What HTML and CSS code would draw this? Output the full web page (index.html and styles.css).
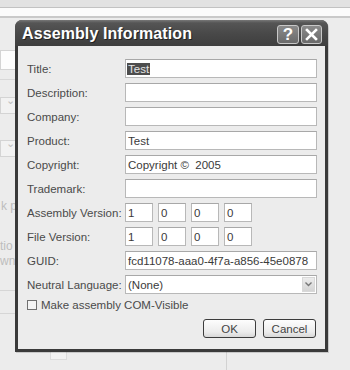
FILE: index.html
```html
<!DOCTYPE html>
<html lang="en">
<head>
    <meta charset="UTF-8">
    <meta name="viewport" content="width=device-width, initial-scale=1.0">
    <title>Assembly Information</title>
    <link rel="stylesheet" href="styles.css">
</head>
<body>
    <div class="desk">
        <div class="toolbar"></div>
        <div class="tabstrip"></div>
        <div class="page">
            <div class="bg-field bg-white"></div>
            <div class="bg-line"></div>
            <div class="bg-field bg-drop"><span class="bg-arrow">&#8964;</span></div>
            <div class="bg-field bg-drop second"><span class="bg-arrow">&#8964;</span></div>
            <div class="bg-label first">k p</div>
            <div class="bg-label tall">tio</div>
            <div class="bg-label">wn</div>
            <div class="bg-rule"></div>
            <div class="bg-rule"></div>
            <div class="bg-bottom">
                <div class="bg-drop wide"><span class="bg-arrow">&#8964;</span></div>
                <div class="bg-split"></div>
            </div>
        </div>
    </div>

    <div class="dialog">
        <div class="titlebar">
            <span class="title">Assembly Information</span>
            <div class="caption-buttons">
                <span class="cap-btn help">?</span>
                <span class="cap-btn close">
                    <svg width="13" height="13" viewBox="0 0 13 13">
                        <path d="M2 2 L11 11 M11 2 L2 11" stroke="#fff" stroke-width="2.6" stroke-linecap="square"/>
                    </svg>
                </span>
            </div>
        </div>
        <div class="dialog-body">
            <div class="fields">
                <label>Title:</label>
                <div class="textbox"><span class="selected">Test</span></div>
                <label>Description:</label>
                <div class="textbox"></div>
                <label>Company:</label>
                <div class="textbox"></div>
                <label>Product:</label>
                <div class="textbox">Test</div>
                <label>Copyright:</label>
                <div class="textbox">Copyright &copy;&nbsp; 2005</div>
                <label>Trademark:</label>
                <div class="textbox"></div>
                <label>Assembly Version:</label>
                <div class="version">
                    <div class="textbox">1</div>
                    <div class="textbox">0</div>
                    <div class="textbox">0</div>
                    <div class="textbox">0</div>
                </div>
                <label>File Version:</label>
                <div class="version">
                    <div class="textbox">1</div>
                    <div class="textbox">0</div>
                    <div class="textbox">0</div>
                    <div class="textbox">0</div>
                </div>
                <label>GUID:</label>
                <div class="textbox">fcd11078-aaa0-4f7a-a856-45e0878</div>
                <label>Neutral Language:</label>
                <div class="textbox combo">
                    <span>(None)</span>
                    <span class="combo-btn">
                        <svg width="7" height="5" viewBox="0 0 7 5">
                            <path d="M0.5 0.5 L3.5 3.5 L6.5 0.5" stroke="#777" stroke-width="1.4" fill="none"/>
                        </svg>
                    </span>
                </div>
                <div class="check-row">
                    <span class="checkbox"></span>
                    <span>Make assembly COM-Visible</span>
                </div>
            </div>
            <div class="buttons">
                <button>OK</button>
                <button>Cancel</button>
            </div>
        </div>
    </div>
</body>
</html>
```

FILE: styles.css
```css
body {
    margin: 0;
    font-family: "Liberation Sans", Arial, sans-serif;
    background-color: #e9e9e9;
    width: 350px;
    height: 370px;
    overflow: hidden;
}
.desk {
    height: 370px;
    display: flex;
    flex-direction: column;
}
.toolbar {
    height: 7px;
    background-color: #e2e2e2;
    border-bottom: 1px solid #c2c2c2;
}
.tabstrip {
    height: 8px;
    background-color: #fbfbfb;
    border-bottom: 2px solid #c9c9c9;
}
.page {
    flex: 1;
    display: flex;
    flex-direction: column;
    background-color: #ececec;
    padding-top: 32px;
}

/* faint form behind the dialog */
.bg-field {
    height: 18px;
    width: 40px;
    border: 1px solid #d4d4d4;
}
.bg-white {
    background-color: #fdfdfd;
}
.bg-line {
    height: 1px;
    width: 30px;
    background-color: #d8d8d8;
    margin-top: 9px;
}
.bg-drop {
    margin-top: 17px;
    height: 15px;
    width: 18px;
    background-color: #f2f2f2;
    position: relative;
}
.bg-drop.second {
    margin-top: 26px;
}
.bg-arrow {
    position: absolute;
    left: 5px;
    top: -4px;
    color: #c0c0c0;
    font-size: 11px;
}
.bg-label {
    color: #bdbdbd;
    font-size: 12px;
    line-height: 14px;
    margin-top: 1px;
}
.bg-label.first {
    margin-top: 42px;
    padding-left: 1px;
}
.bg-label.tall {
    margin-top: 26px;
}
.bg-rule {
    height: 1px;
    width: 40px;
    background-color: #d6d6d6;
    margin-top: 22px;
}
.bg-rule:first-of-type {
    margin-top: 30px;
}
.bg-bottom {
    display: flex;
    margin-top: 24px;
    flex: 1;
}
.bg-drop.wide {
    margin: 0 0 0 50px;
    width: 15px;
    height: 20px;
    border: 1px solid #dcdcdc;
}
.bg-split {
    width: 1px;
    background-color: #d2d2d2;
    margin-left: 159px;
}

/* dialog window */
.dialog {
    position: absolute;
    left: 15px;
    top: 20px;
    width: 313px;
    height: 332px;
    background-color: #3a3a3a;
    border-radius: 7px 7px 0 0;
    display: flex;
    flex-direction: column;
    box-shadow: 1px 1px 0 rgba(0,0,0,0.15);
}
.titlebar {
    height: 26px;
    border-radius: 7px 7px 0 0;
    background: linear-gradient(#777 0px, #555 3px, #484848 14px, #3e3e3e 26px);
    display: flex;
    align-items: center;
    justify-content: space-between;
    padding: 0 6px 0 7px;
}
.title {
    color: #fff;
    font-weight: bold;
    font-size: 16px;
    letter-spacing: 0.1px;
    text-shadow: 1px 1px 0 #222;
    margin-top: 2px;
}
.caption-buttons {
    display: flex;
    gap: 2px;
    margin-top: 3px;
}
.cap-btn {
    height: 17px;
    border: 1px solid #c8c8c8;
    border-radius: 3px;
    background: linear-gradient(#8a8a8a, #6a6a6a);
    color: #fff;
    display: flex;
    align-items: center;
    justify-content: center;
}
.cap-btn.help {
    width: 20px;
    font-weight: bold;
    font-size: 17px;
}
.cap-btn.close {
    width: 19px;
}
.dialog-body {
    flex: 1;
    margin: 0 3px 3px;
    background-color: #ececec;
    padding: 13px 8px 0 9px;
    display: flex;
    flex-direction: column;
}
.fields {
    display: grid;
    grid-template-columns: 98px 192px;
    grid-auto-rows: 19px;
    row-gap: 5px;
    font-size: 11.5px;
    color: #444;
}
label {
    display: flex;
    align-items: center;
    color: #4a4a4a;
}
.textbox {
    background-color: #fff;
    border: 1px solid #b8b8b8;
    border-top-color: #a8a8a8;
    box-sizing: border-box;
    padding: 0 2px;
    display: flex;
    align-items: center;
    white-space: nowrap;
    overflow: hidden;
    color: #3a3a3a;
}
.selected {
    background-color: #4d4d4d;
    color: #e4e4e4;
    padding: 0 1px;
    margin-left: -1px;
}
.version {
    display: flex;
    gap: 5px;
}
.version .textbox {
    width: 28px;
}
.combo {
    justify-content: space-between;
    padding-right: 1px;
}
.combo-btn {
    width: 13px;
    height: 15px;
    background: linear-gradient(#ececec, #d4d4d4);
    border: 1px solid #d8d8d8;
    box-sizing: border-box;
    display: flex;
    align-items: center;
    justify-content: center;
}
.check-row {
    grid-column: 1 / 3;
    display: flex;
    align-items: center;
    gap: 4px;
    height: 11px;
    color: #4a4a4a;
}
.checkbox {
    width: 8px;
    height: 8px;
    border: 1px solid #707070;
    background-color: #f4f4f4;
}
.buttons {
    display: flex;
    justify-content: flex-end;
    gap: 7px;
    margin-top: 1px;
    padding-right: 1px;
}
button {
    width: 53px;
    height: 19px;
    border: 1px solid #3c3c3c;
    border-radius: 3px;
    background: linear-gradient(#fdfdfd, #ececec 70%, #d8d8d8);
    font-family: "Liberation Sans", Arial, sans-serif;
    font-size: 11.5px;
    color: #444;
    padding: 0;
}
```
